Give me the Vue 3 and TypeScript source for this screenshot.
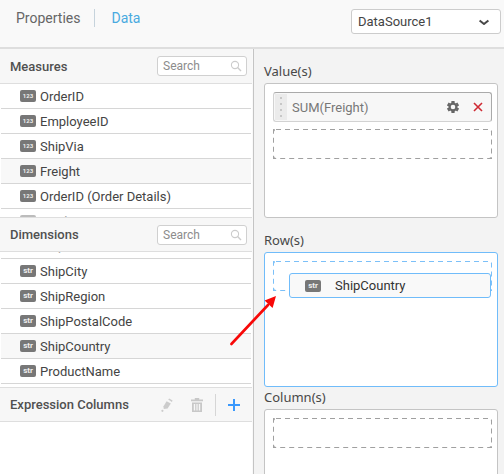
<script setup lang="ts">
import { ref } from 'vue'

interface Field {
  name: string
  active?: boolean
}

const measures: Field[] = [
  { name: 'OrderID' },
  { name: 'EmployeeID' },
  { name: 'ShipVia' },
  { name: 'Freight', active: true },
  { name: 'OrderID (Order Details)' },
  { name: 'ProductID' },
]

const dimensions: Field[] = [
  { name: 'ShipName' },
  { name: 'ShipCity' },
  { name: 'ShipRegion' },
  { name: 'ShipPostalCode' },
  { name: 'ShipCountry', active: true },
  { name: 'ProductName' },
]

const source = ref('DataSource1')
const measureQuery = ref('')
const dimensionQuery = ref('')
</script>

<template>
  <div class="designer">
    <header class="topbar">
      <nav class="tabs">
        <a href="#properties" class="tab">Properties</a>
        <a href="#data" class="tab current">Data</a>
      </nav>
      <div class="source">
        <select v-model="source" aria-label="Data source">
          <option>DataSource1</option>
        </select>
        <svg class="chevron" viewBox="0 0 12 7" width="12" height="7" aria-hidden="true">
          <path d="M1.6 1.4 L6 5 L10.4 1.4" fill="none" stroke="#484848" stroke-width="2" stroke-linejoin="round" />
        </svg>
      </div>
    </header>

    <main class="columns">
      <section class="fields">
        <div class="head">
          <h2>Measures</h2>
          <label class="search">
            <input v-model="measureQuery" type="text" placeholder="Search" aria-label="Search measures" />
            <svg viewBox="0 0 12 12" width="12" height="12" aria-hidden="true">
              <circle cx="5" cy="5" r="3.6" fill="none" stroke="#cccccc" stroke-width="1.1" />
              <path d="M7.6 7.6 L11 11" stroke="#cccccc" stroke-width="1.4" />
            </svg>
          </label>
        </div>
        <ul class="list fading">
          <li v-for="f in measures" :key="f.name" :class="{ active: f.active }">
            <span class="tag">123</span>{{ f.name }}
          </li>
        </ul>

        <div class="head">
          <h2>Dimensions</h2>
          <label class="search">
            <input v-model="dimensionQuery" type="text" placeholder="Search" aria-label="Search dimensions" />
            <svg viewBox="0 0 12 12" width="12" height="12" aria-hidden="true">
              <circle cx="5" cy="5" r="3.6" fill="none" stroke="#cccccc" stroke-width="1.1" />
              <path d="M7.6 7.6 L11 11" stroke="#cccccc" stroke-width="1.4" />
            </svg>
          </label>
        </div>
        <ul class="list scrolled">
          <li v-for="f in dimensions" :key="f.name" :class="{ active: f.active }">
            <span class="tag str">str</span>{{ f.name }}
          </li>
        </ul>

        <div class="head">
          <h2>Expression Columns</h2>
          <div class="tools">
            <button type="button" aria-label="Edit expression" disabled>
              <svg viewBox="0 0 12 16" width="12" height="16">
                <path d="M5.6 4.2 L9.8 6.6 L6.6 11.6 L2.8 12 L2.4 9.4 Z" fill="#cccccc" />
                <path d="M7.2 2.6 L8.2 1.4 L11.6 3.4 L10.9 5 Z" fill="#cccccc" />
                <circle cx="1.4" cy="13.8" r="1.1" fill="#cccccc" />
              </svg>
            </button>
            <button type="button" aria-label="Delete expression" disabled>
              <svg viewBox="0 0 12 14" width="12" height="14">
                <path d="M0 1.4 H3.8 V0 H8.2 V1.4 H12 V3.2 H0 Z" fill="#c8c8c8" />
                <path fill-rule="evenodd" d="M1 4.4 H11 V14 H1 Z M2.8 6 V12.4 H4.2 V6 Z M5.4 6 V12.4 H6.6 V6 Z M7.8 6 V12.4 H9.2 V6 Z" fill="#c8c8c8" />
              </svg>
            </button>
            <span class="bar"></span>
            <button type="button" aria-label="Add expression">
              <svg viewBox="0 0 12 12" width="12" height="12">
                <path d="M6 0 V12 M0 6 H12" stroke="#3b99fc" stroke-width="2" />
              </svg>
            </button>
          </div>
        </div>
        <div class="rest"></div>
      </section>

      <section class="shelves">
        <h3>Value(s)</h3>
        <div class="shelf">
          <div class="item">
            <span class="grip">
              <svg viewBox="0 0 2 20" width="2" height="20" aria-hidden="true">
                <path d="M0 1 H2 M0 7 H2 M0 13 H2 M0 19 H2" stroke="#bcbcbc" stroke-width="1.6" />
              </svg>
            </span>
            <span class="label">SUM(Freight)</span>
            <button type="button" aria-label="Settings">
              <svg viewBox="0 0 12 12" width="12" height="12">
                <circle cx="6" cy="6" r="3.4" fill="none" stroke="#666666" stroke-width="2.2" />
                <path d="M6 0 V2 M6 10 V12 M0.8 3 L2.5 4 M9.5 8 L11.2 9 M0.8 9 L2.5 8 M9.5 4 L11.2 3" stroke="#666666" stroke-width="3.2" />
              </svg>
            </button>
            <button type="button" aria-label="Remove">
              <svg viewBox="0 0 10 10" width="10" height="10">
                <path d="M1 1 L9 9 M9 1 L1 9" stroke="#cf2a33" stroke-width="1.6" />
              </svg>
            </button>
          </div>
          <svg class="slot" aria-hidden="true"><rect width="100%" height="100%" rx="3" /></svg>
        </div>

        <h3>Row(s)</h3>
        <div class="shelf target">
          <svg class="slot" aria-hidden="true"><rect width="100%" height="100%" rx="3" /></svg>
          <div class="ghost"><span class="tag str">str</span>ShipCountry</div>
          <svg class="arrow" viewBox="0 0 48 52" width="48" height="52" aria-hidden="true">
            <path d="M2.4 50 L39 11" stroke="#f80808" stroke-width="2.6" stroke-linecap="round" />
            <path d="M47 2 L43.6 14 L35.6 6.4 Z" fill="#f80808" />
          </svg>
        </div>

        <h3 class="tight">Column(s)</h3>
        <div class="shelf">
          <svg class="slot" aria-hidden="true"><rect width="100%" height="100%" rx="3" /></svg>
        </div>
      </section>
    </main>
  </div>
</template>

<style>
body {
  margin: 0;
}
</style>

<style scoped>
.designer {
  height: 100vh;
  display: flex;
  flex-direction: column;
  overflow: hidden;
  background: #f9f9f9;
  color: #444444;
  font: 13px Roboto, sans-serif;
}
.designer * {
  box-sizing: border-box;
}
button {
  display: flex;
  padding: 0;
  border: 0;
  background: none;
}
.topbar {
  flex: none;
  height: 49px;
  display: flex;
  justify-content: space-between;
  padding: 9px 3px 0 16px;
  border-bottom: 2px solid #dedede;
}
.tabs {
  display: flex;
  height: 18px;
  line-height: 18px;
  font-size: 14px;
}
.tab {
  color: #666666;
  text-decoration: none;
}
.tab.current {
  margin-left: 14px;
  padding-left: 16px;
  border-left: 1px solid #c6d3dc;
  color: #49aae0;
}
.source {
  position: relative;
  width: 150px;
  height: 25px;
}
.source select {
  width: 100%;
  height: 100%;
  padding: 0 6px;
  appearance: none;
  border: 1px solid #cccccc;
  border-radius: 3px;
  background: #ffffff;
  color: #444444;
  font: inherit;
}
.chevron {
  position: absolute;
  right: 11px;
  top: 10px;
}
.columns {
  flex: 1;
  min-height: 0;
  display: grid;
  grid-template-columns: 1fr 1fr;
}
.fields {
  display: flex;
  flex-direction: column;
  min-width: 0;
}
.head {
  flex: none;
  height: 35px;
  display: flex;
  align-items: center;
  justify-content: space-between;
  padding: 0 5px 0 10px;
  border-bottom: 1px solid #dedede;
  background: #f7f7f7;
}
.list + .head {
  border-top: 1px solid #dedede;
}
h2 {
  margin: 0;
  font-size: 13px;
  font-weight: 500;
  color: #505050;
}
.search {
  width: 90px;
  height: 20px;
  display: flex;
  align-items: center;
  padding: 0 4px 0 5px;
  border: 1px solid #d0d0d0;
  border-radius: 3px;
  background: #ffffff;
}
.search input {
  flex: 1;
  min-width: 0;
  padding: 0;
  border: 0;
  background: none;
  font: 12px Roboto, sans-serif;
}
.search input::placeholder {
  color: #8c8c8c;
}
.list {
  flex: none;
  height: 133px;
  margin: 0;
  padding: 0 1px;
  overflow: hidden;
  list-style: none;
  background: #ffffff;
}
.list.scrolled {
  height: 135px;
  display: flex;
  flex-direction: column;
  justify-content: flex-end;
  padding-bottom: 3px;
}
.list li {
  flex: none;
  height: 25px;
  display: flex;
  align-items: center;
  gap: 4px;
  padding-left: 19px;
  border-bottom: 1px solid #d6d6d6;
}
.list li.active {
  background: #f8f8f8;
}
.fading li:last-child {
  color: #a4a4a4;
}
.fading li:last-child .tag {
  background: #bcbcbc;
}
.scrolled li:first-child {
  height: 27px;
  color: #a4a4a4;
}
.tag {
  width: 16px;
  height: 12px;
  border-radius: 2px;
  background: #777777;
  color: #eeeeee;
  font: 700 6px/12px Roboto, sans-serif;
  text-align: center;
}
.tag.str {
  font-size: 8px;
  line-height: 11px;
}
.tools {
  display: flex;
  align-items: center;
  gap: 18px;
  padding-right: 7px;
}
.bar {
  width: 1px;
  height: 22px;
  margin-left: -6px;
  margin-right: -6px;
  background: #d6d6d6;
}
.rest {
  flex: 1;
  background: #ffffff;
}
.shelves {
  margin-left: 1px;
  padding: 0 6px 0 10px;
  border-left: 1px solid #c4c4c4;
  background: #f3f3f3;
  display: flex;
  flex-direction: column;
  min-width: 0;
}
h3 {
  flex: none;
  height: 34px;
  margin: 0;
  padding-top: 13px;
  font: 13px/18px "Noto Sans", sans-serif;
  color: #484848;
}
h3.tight {
  height: 22px;
  padding-top: 1px;
}
.shelf {
  position: relative;
  flex: none;
  height: 135px;
  padding: 8px 5px 0 8px;
  border: 1px solid #c4c4c4;
  border-radius: 3px;
  background: #ffffff;
}
.shelf.target {
  border-color: #70bcfa;
}
.item {
  height: 30px;
  display: flex;
  align-items: center;
  gap: 14px;
  padding: 1px 8px 1px 1px;
  margin-bottom: 7px;
  border: 1px solid #d2d2d2;
  border-top-color: #aaaaaa;
  border-right-color: #aaaaaa;
  border-radius: 3px;
  background: #f7f7f7;
}
.label {
  flex: 1;
  margin-left: -9px;
  color: #777777;
}
.grip {
  align-self: stretch;
  width: 12px;
  display: flex;
  align-items: center;
  justify-content: center;
  background: #ebebeb;
}
.slot {
  display: block;
  width: 100%;
  height: 30px;
}
.slot rect {
  fill: none;
  stroke: #a0a0a0;
  stroke-width: 2;
  stroke-dasharray: 5 4;
}
.target .slot rect {
  stroke: #7cc0f8;
}
.ghost {
  position: absolute;
  left: 24px;
  right: 6px;
  top: 20px;
  height: 25px;
  display: flex;
  align-items: center;
  gap: 14px;
  padding-left: 15px;
  border: 1px solid #70bcfa;
  border-radius: 3px;
  background: #f9f9f9;
  color: #333333;
}
.arrow {
  position: absolute;
  left: -36px;
  top: 41px;
}
</style>
